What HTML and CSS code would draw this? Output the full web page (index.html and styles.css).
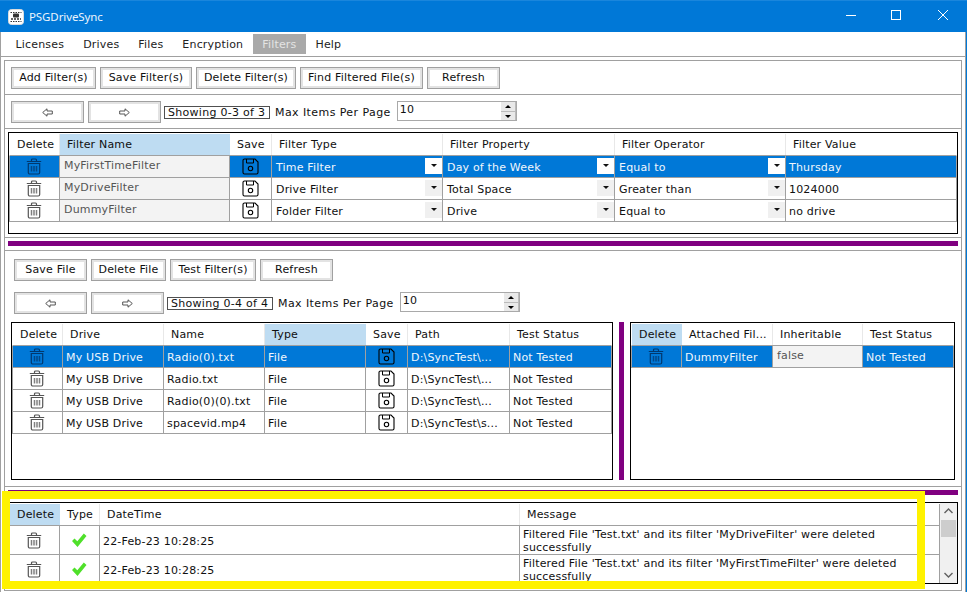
FILE: index.html
```html
<!DOCTYPE html>
<html lang="en">
<head>
<meta charset="utf-8">
<title>PSGDriveSync</title>
<link rel="stylesheet" href="styles.css">
</head>
<body>
<svg class="defs" width="0" height="0" aria-hidden="true">
  <symbol id="trash" viewBox="0 0 16 17">
    <path d="M.8 3.500h14.400M5.500 3.500V2a1 1 0 0 1 1-1h3a1 1 0 0 1 1 1v1.500M2.300 5.500h11.400V14.500a1.500 1.500 0 0 1-1.500 1.500H3.800a1.500 1.500 0 0 1-1.500-1.500z" fill="none" stroke="currentColor" stroke-width="1.200"/>
    <path d="M5.500 8v5.500M8 8v5.500M10.500 8v5.500" fill="none" stroke="currentColor" stroke-width="1.500" opacity=".75"/>
  </symbol>
  <symbol id="floppy" viewBox="0 0 17 17">
    <path d="M2.500 1H13l3 3v10.500a1.500 1.500 0 0 1-1.500 1.500h-12A1.500 1.500 0 0 1 1 14.500v-12A1.500 1.500 0 0 1 2.500 1z" fill="none" stroke="#000" stroke-width="1.100"/>
    <path d="M4.500 1v4h7V1" fill="none" stroke="#000" stroke-width="1"/>
    <circle cx="8.500" cy="10.500" r="2.200" fill="none" stroke="#000" stroke-width="1.100"/>
  </symbol>
  <symbol id="check" viewBox="0 0 16 16">
    <path d="M1 9l2.500-2.500 2.800 2.800L12.800 1.500 15.500 4l-9 11z" fill="#4fe02a"/>
  </symbol>
  <symbol id="left" viewBox="0 0 11 9">
    <path d="M.7 4.500 5 .8v2.200h5.300v3H5v2.200z" fill="#fff" stroke="#444" stroke-width=".9"/>
  </symbol>
  <symbol id="right" viewBox="0 0 11 9">
    <path d="M10.300 4.500 6 .8v2.200H.7v3H6v2.200z" fill="#fff" stroke="#444" stroke-width=".9"/>
  </symbol>
</svg>

<div class="window">
  <header class="titlebar">
    <svg class="logo" viewBox="0 0 16 16" width="16" height="16" aria-hidden="true">
      <rect x=".5" y=".5" width="15" height="15" rx="3" fill="#fff" stroke="#ddd"/>
      <path d="M2.500 3.500h11M2.500 12.500h11" stroke="#333" stroke-dasharray="1.500 1"/>
      <rect x="5" y="4.500" width="6" height="4" rx="1" fill="#333"/>
      <path d="M3 10h10" stroke="#333" stroke-width="1.500" stroke-dasharray="2 1"/>
    </svg>
    <span class="app-name">PSGDriveSync</span>
    <div class="winctl">
      <svg viewBox="0 0 46 32" width="46" height="32" aria-hidden="true"><path d="M18 15.500h10" stroke="#fff"/></svg>
      <svg viewBox="0 0 46 32" width="46" height="32" aria-hidden="true"><rect x="17.500" y="10.500" width="9" height="9" fill="none" stroke="#fff"/></svg>
      <svg viewBox="0 0 46 32" width="46" height="32" aria-hidden="true"><path d="M18 10l10 10M28 10 18 20" stroke="#fff" fill="none"/></svg>
    </div>
  </header>

  <div class="client">
    <nav class="menu">
      <span class="menu-item">Licenses</span>
      <span class="menu-item">Drives</span>
      <span class="menu-item">Files</span>
      <span class="menu-item">Encryption</span>
      <span class="menu-item active">Filters</span>
      <span class="menu-item">Help</span>
    </nav>

    <main class="panel">
      <section class="bar">
        <button class="btn w85">Add Filter(s)</button>
        <button class="btn w92">Save Filter(s)</button>
        <button class="btn w100">Delete Filter(s)</button>
        <button class="btn w123">Find Filtered File(s)</button>
        <button class="btn w73">Refresh</button>
      </section>
      <section class="bar">
        <button class="btn w73"><svg class="arrow"><use href="#left"/></svg></button>
        <button class="btn w73"><svg class="arrow"><use href="#right"/></svg></button>
        <span class="showing">Showing 0-3 of 3</span>
        <span class="max-label">Max Items Per Page</span>
        <div class="spin"><span class="spin-val">10</span><span class="spin-btns"><i class="up"></i><i class="down"></i></span></div>
      </section>

      <section class="table-sec">
        <div class="table t-filters">
          <div class="row head">
            <div class="c">Delete</div><div class="c sorted">Filter Name</div><div class="c">Save</div><div class="c">Filter Type</div><div class="c">Filter Property</div><div class="c">Filter Operator</div><div class="c">Filter Value</div>
          </div>
          <div class="row sel">
            <div class="c ic"><svg class="i-trash"><use href="#trash"/></svg></div><div class="c ro">MyFirstTimeFilter</div><div class="c ic"><svg class="i-floppy"><use href="#floppy"/></svg></div>
            <div class="c dd">Time Filter<i class="caret"></i></div><div class="c dd">Day of the Week<i class="caret"></i></div><div class="c dd">Equal to<i class="caret"></i></div><div class="c">Thursday</div>
          </div>
          <div class="row">
            <div class="c ic"><svg class="i-trash"><use href="#trash"/></svg></div><div class="c ro">MyDriveFilter</div><div class="c ic"><svg class="i-floppy"><use href="#floppy"/></svg></div>
            <div class="c dd">Drive Filter<i class="caret"></i></div><div class="c dd">Total Space<i class="caret"></i></div><div class="c dd">Greater than<i class="caret"></i></div><div class="c">1024000</div>
          </div>
          <div class="row">
            <div class="c ic"><svg class="i-trash"><use href="#trash"/></svg></div><div class="c ro">DummyFilter</div><div class="c ic"><svg class="i-floppy"><use href="#floppy"/></svg></div>
            <div class="c dd">Folder Filter<i class="caret"></i></div><div class="c dd">Drive<i class="caret"></i></div><div class="c dd">Equal to<i class="caret"></i></div><div class="c">no drive</div>
          </div>
        </div>
      </section>

      <section class="divider"><div class="purple"></div></section>

      <section class="files">
        <div class="bar2">
          <button class="btn w73">Save File</button>
          <button class="btn w75">Delete File</button>
          <button class="btn w86">Test Filter(s)</button>
          <button class="btn w73">Refresh</button>
        </div>
        <div class="bar2">
          <button class="btn w73"><svg class="arrow"><use href="#left"/></svg></button>
          <button class="btn w73"><svg class="arrow"><use href="#right"/></svg></button>
          <span class="showing">Showing 0-4 of 4</span>
          <span class="max-label">Max Items Per Page</span>
          <div class="spin"><span class="spin-val">10</span><span class="spin-btns"><i class="up"></i><i class="down"></i></span></div>
        </div>
        <div class="split">
          <div class="table t-files">
            <div class="row head">
              <div class="c">Delete</div><div class="c">Drive</div><div class="c">Name</div><div class="c sorted">Type</div><div class="c">Save</div><div class="c">Path</div><div class="c">Test Status</div>
            </div>
            <div class="row sel">
              <div class="c ic"><svg class="i-trash"><use href="#trash"/></svg></div><div class="c">My USB Drive</div><div class="c">Radio(0).txt</div><div class="c">File</div><div class="c ic"><svg class="i-floppy"><use href="#floppy"/></svg></div><div class="c">D:\SyncTest\...</div><div class="c">Not Tested</div>
            </div>
            <div class="row">
              <div class="c ic"><svg class="i-trash"><use href="#trash"/></svg></div><div class="c">My USB Drive</div><div class="c">Radio.txt</div><div class="c">File</div><div class="c ic"><svg class="i-floppy"><use href="#floppy"/></svg></div><div class="c">D:\SyncTest\...</div><div class="c">Not Tested</div>
            </div>
            <div class="row">
              <div class="c ic"><svg class="i-trash"><use href="#trash"/></svg></div><div class="c">My USB Drive</div><div class="c">Radio(0)(0).txt</div><div class="c">File</div><div class="c ic"><svg class="i-floppy"><use href="#floppy"/></svg></div><div class="c">D:\SyncTest\...</div><div class="c">Not Tested</div>
            </div>
            <div class="row">
              <div class="c ic"><svg class="i-trash"><use href="#trash"/></svg></div><div class="c">My USB Drive</div><div class="c">spacevid.mp4</div><div class="c">File</div><div class="c ic"><svg class="i-floppy"><use href="#floppy"/></svg></div><div class="c">D:\SyncTest\s...</div><div class="c">Not Tested</div>
            </div>
          </div>
          <div class="vbar"></div>
          <div class="table t-attached">
            <div class="row head">
              <div class="c sorted">Delete</div><div class="c">Attached Fil...</div><div class="c">Inheritable</div><div class="c">Test Status</div>
            </div>
            <div class="row sel">
              <div class="c ic"><svg class="i-trash"><use href="#trash"/></svg></div><div class="c">DummyFilter</div><div class="c ro">false</div><div class="c">Not Tested</div>
            </div>
          </div>
        </div>
      </section>

      <section class="divider lower"><div class="purple"></div></section>

      <section class="log-sec">
        <div class="table t-log">
          <div class="log-body">
            <div class="row head">
              <div class="c sorted">Delete</div><div class="c">Type</div><div class="c">DateTime</div><div class="c">Message</div>
            </div>
            <div class="row">
              <div class="c ic"><svg class="i-trash"><use href="#trash"/></svg></div><div class="c ic"><svg class="i-check"><use href="#check"/></svg></div><div class="c">22-Feb-23 10:28:25</div><div class="c msg">Filtered File 'Test.txt' and its filter 'MyDriveFilter' were deleted successfully</div>
            </div>
            <div class="row">
              <div class="c ic"><svg class="i-trash"><use href="#trash"/></svg></div><div class="c ic"><svg class="i-check"><use href="#check"/></svg></div><div class="c">22-Feb-23 10:28:25</div><div class="c msg">Filtered File 'Test.txt' and its filter 'MyFirstTimeFilter' were deleted successfully</div>
            </div>
          </div>
          <div class="scroll">
            <svg viewBox="0 0 17 17" width="17" height="17" aria-hidden="true"><path d="M4.500 10 8.500 6l4 4" fill="none" stroke="#606060" stroke-width="1.400"/></svg>
            <div class="thumb"></div>
            <svg class="scroll-down" viewBox="0 0 17 17" width="17" height="17" aria-hidden="true"><path d="M4.500 7l4 4 4-4" fill="none" stroke="#606060" stroke-width="1.400"/></svg>
          </div>
        </div>
      </section>
      <div class="highlight"></div>
    </main>
  </div>
</div>
</body>
</html>
```

FILE: styles.css
```css
* { box-sizing: border-box; }
html, body { margin: 0; padding: 0; background: #fff; overflow: hidden; }
body { font: 11px/13px "DejaVu Sans", Verdana, sans-serif; letter-spacing: .18px; color: #101010; }
.defs { position: absolute; }

.window { width: 967px; height: 592px; display: flex; flex-direction: column; background: #0078d7; overflow: hidden; }

.titlebar { height: 32px; flex: none; display: flex; align-items: center; padding-left: 8px; background: #0078d7; color: #fff; border-top: 1px solid #1a86dc; }
.logo { flex: none; }
.app-name { margin-left: 5px; font: 11.500px/16px "Noto Sans", sans-serif; letter-spacing: -.1px; color: #eaf4fc; }
.winctl { margin-left: auto; display: flex; margin-right: 1px; margin-top: -1px; }
.winctl svg { display: block; }

.client { flex: 1; min-height: 0; margin-right: 1px; background: #fff; border-left: 1px solid #a0a0a0; border-right: 1px solid #a0a0a0; display: flex; flex-direction: column; }

.menu { height: 25px; flex: none; display: flex; align-items: flex-start; padding: 2px 0 0 5px; border-bottom: 1px solid #a0a0a0; }
.menu-item { height: 20px; line-height: 21px; padding: 0 9.500px; color: #222; }
.menu-item.active { background: #a9a9a9; color: #e4e4e4; }

.panel { position: relative; flex: 1; min-height: 0; margin: 3px 3px 1px 3px; border: 1px solid #a0a0a0; }

.bar { height: 34px; display: flex; align-items: flex-start; padding: 6px 0 0 6px; gap: 4px; border-bottom: 1px solid #a0a0a0; }
.bar2 { height: 22px; display: flex; align-items: flex-start; gap: 4px; margin-bottom: 11px; }

.btn { height: 22px; flex: none; padding: 0; background: #fff; border: 1px solid #a0a0a0; box-shadow: inset 0 0 0 2px #e3e3e3; font: inherit; letter-spacing: inherit; line-height: 18px; color: #101010; display: flex; align-items: center; justify-content: center; }
.w73 { width: 73px; }
.w75 { width: 75px; }
.w85 { width: 85px; }
.w86 { width: 86px; }
.w92 { width: 92px; }
.w100 { width: 100px; }
.w123 { width: 123px; }
.arrow { width: 11px; height: 9px; }

.showing { width: 106px; height: 13px; margin: 5px 0 0 -1px; padding: 0 3px; border: 1px solid #505050; line-height: 11px; letter-spacing: .28px; white-space: nowrap; }
.max-label { margin: 5px 0 0 1px; line-height: 14px; letter-spacing: .42px; white-space: nowrap; }
.spin { width: 120px; height: 20px; margin-left: 2px; border: 1px solid #a9a9a9; display: flex; justify-content: space-between; }
.spin-val { padding: 0 0 0 2px; line-height: 15px; }
.spin-btns { width: 15px; padding: 0 1px 0 0; display: flex; flex-direction: column; gap: 1px; background: #bbb; }
.spin-btns i { flex: 1; position: relative; background: #e9e9e9; }
.spin-btns i::after { content: ""; position: absolute; left: 4px; border-left: 3px solid transparent; border-right: 3px solid transparent; }
.spin-btns .up::after { top: 3px; border-bottom: 3px solid #000; }
.spin-btns .down::after { top: 3px; border-top: 3px solid #000; }

.table-sec { height: 109px; padding: 3px 3px 0 3px; border-bottom: 1px solid #a0a0a0; }

.table { border: 1px solid #000; padding-top: 1px; background: #fff; overflow: hidden; }
.t-filters { height: 102px; }
.row { display: grid; height: 22px; border: solid #a0a0a0; border-width: 0 1px 1px; }
.row.head { border-left-color: #fff; border-right-color: #fff; }
.t-filters .row { grid-template-columns: 50px 170px 42px 171px 172px 171px 170px; }
.t-files .row { grid-template-columns: 50px 101px 101px 101px 42px 102px 101px; }
.t-attached .row { grid-template-columns: 50px 91px 90px 90px; }

.c { position: relative; min-width: 0; height: 21px; padding: 5px 0 0 3px; white-space: nowrap; overflow: hidden; border-right: 1px solid #a0a0a0; }
.c:last-child { border-right: 0; }
.dd { padding-left: 4px; }
.head .c { padding: 4px 0 0 7px; border-right-color: #e8e8e8; }
.head .sorted { background: #bedcf2; border-right-color: #bedcf2; }
.sel { background: #0078d7; color: #f0f6fc; }
.ic { padding: 0; display: flex; align-items: center; justify-content: center; }
.ro { padding: 3px 0 0 4px; background: #f3f3f3; color: #555; }
.i-trash { width: 16px; height: 17px; margin-right: 1px; color: #555; }
.sel .i-trash { color: #00386e; }
.i-floppy { width: 17px; height: 17px; }
.i-check { width: 16px; height: 16px; margin-right: 1px; }

.caret { position: absolute; right: 0; top: 2px; width: 17px; height: 16px; background: #f0f0f0; }
.caret::after { content: ""; position: absolute; left: 6px; top: 6px; border-left: 3px solid transparent; border-right: 3px solid transparent; border-top: 3px solid #111; }
.sel .caret { background: #fff; }

.divider { height: 13px; padding: 3px 3px 0 3px; border-bottom: 1px solid #a0a0a0; }
.divider.lower { height: 15px; border-bottom: 0; }
.purple { height: 5px; background: #800080; }

.files { height: 236px; padding: 8px 0 0 9px; border-bottom: 1px solid #a0a0a0; }
.files .bar2:nth-child(2) { margin-bottom: 8px; }
.split { display: flex; margin-left: -3px; }
.t-files { width: 602px; height: 158px; }
.vbar { width: 5px; margin: 0 6px; background: #800080; }
.t-attached { width: 325px; height: 158px; }

.log-sec { padding: 0 3px; }
.t-log { height: 82px; display: flex; padding-top: 1px; }
.log-body { width: 931px; }
.t-log .row { grid-template-columns: 50px 40px 420px 1fr; height: 29px; border-right: 1px solid #a0a0a0; }
.t-log .row.head { height: 22px; }
.t-log .c { height: 28px; }
.t-log .head .c { height: 21px; }
.t-log .c:not(.ic) { padding-top: 9px; }
.t-log .head .c:not(.ic) { padding-top: 4px; }
.t-log .msg { padding: 2px 20px 0 3px !important; white-space: normal; }

.scroll { width: 17px; background: #f0f0f0; margin-top: -1px; display: flex; flex-direction: column; }
.scroll svg { display: block; flex: none; }
.thumb { height: 17px; margin: 0 1px; background: #cdcdcd; }
.scroll-down { margin-top: auto; }

.highlight { position: absolute; left: -3px; top: 430px; width: 923px; height: 98px; border: 8px solid #fff200; pointer-events: none; }
```
